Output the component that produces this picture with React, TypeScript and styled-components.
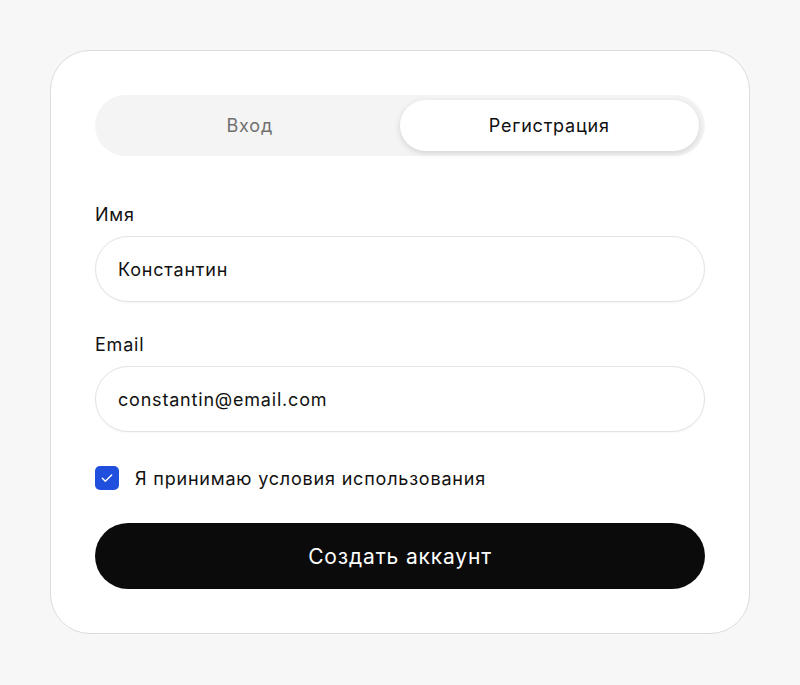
import React, { useState } from "react";
import styled, { createGlobalStyle } from "styled-components";

const GlobalStyle = createGlobalStyle`
  * { box-sizing: border-box; }
  html, body { margin: 0; padding: 0; }
  body {
    background: #f7f7f7;
    font-family: Inter, "Noto Sans", "Liberation Sans", sans-serif;
    letter-spacing: 0.05em;
    color: #111;
  }
`;

const Page = styled.div`
  width: 800px;
  height: 685px;
  padding: 50px;
`;

const Card = styled.div`
  width: 700px;
  background: #fff;
  border: 1px solid #dcdcdc;
  border-radius: 40px;
  padding: 44px;
  display: flex;
  flex-direction: column;
`;

const Tabs = styled.div`
  display: grid;
  grid-template-columns: 1fr 1fr;
  height: 61px;
  padding: 5px 6px 5px 5px;
  background: #f4f4f4;
  border-radius: 31px;
  margin-bottom: 47px;
`;

const Tab = styled.button<{ $active?: boolean }>`
  border: none;
  border-radius: 26px;
  font-family: inherit;
  letter-spacing: inherit;
  font-size: 18px;
  cursor: pointer;
  background: ${({ $active }) => ($active ? "#fff" : "transparent")};
  color: ${({ $active }) => ($active ? "#111" : "#707070")};
  box-shadow: ${({ $active }) =>
    $active ? "0 2px 6px rgba(0,0,0,0.14)" : "none"};
`;

const Field = styled.div`
  display: flex;
  flex-direction: column;
  gap: 10px;
  margin-bottom: 31px;
`;

const Label = styled.label`
  font-size: 18px;
  line-height: 23px;
  color: #111;
`;

const Input = styled.input`
  height: 66px;
  width: 100%;
  border: 1px solid #e3e3e3;
  border-radius: 33px;
  padding: 0 22px;
  font-family: inherit;
  letter-spacing: inherit;
  font-size: 18px;
  color: #111;
  background: #fff;
  outline: none;
  box-shadow: 0 1px 2px rgba(0, 0, 0, 0.04);
`;

const CheckRow = styled.label`
  display: flex;
  align-items: center;
  gap: 16px;
  font-size: 18px;
  color: #111;
  margin-top: 3px;
  margin-bottom: 33px;
  cursor: pointer;
`;

const Box = styled.span<{ $checked: boolean }>`
  width: 24px;
  height: 24px;
  border-radius: 5px;
  display: flex;
  align-items: center;
  justify-content: center;
  background: ${({ $checked }) => ($checked ? "#1f4fdc" : "#fff")};
  border: ${({ $checked }) => ($checked ? "none" : "1px solid #ccc")};
`;

const Submit = styled.button`
  height: 66px;
  width: 100%;
  border: none;
  border-radius: 33px;
  background: #0b0b0b;
  color: #fff;
  font-family: inherit;
  font-size: 21px;
  letter-spacing: 0.04em;
  cursor: pointer;
`;

export default function App() {
  const [tab, setTab] = useState<"login" | "register">("register");
  const [name, setName] = useState("Константин");
  const [email, setEmail] = useState("constantin@email.com");
  const [agree, setAgree] = useState(true);

  return (
    <>
      <GlobalStyle />
      <Page>
        <Card>
          <Tabs>
            <Tab $active={tab === "login"} onClick={() => setTab("login")}>
              Вход
            </Tab>
            <Tab $active={tab === "register"} onClick={() => setTab("register")}>
              Регистрация
            </Tab>
          </Tabs>

          <Field>
            <Label>Имя</Label>
            <Input value={name} onChange={(e) => setName(e.target.value)} />
          </Field>

          <Field>
            <Label>Email</Label>
            <Input value={email} onChange={(e) => setEmail(e.target.value)} />
          </Field>

          <CheckRow onClick={() => setAgree(!agree)}>
            <Box $checked={agree}>
              {agree && (
                <svg width="16" height="16" viewBox="0 0 24 24" fill="none">
                  <path
                    d="M5 12.5l4.5 4.5L19 7.5"
                    stroke="#fff"
                    strokeWidth="2.2"
                    strokeLinecap="round"
                    strokeLinejoin="round"
                  />
                </svg>
              )}
            </Box>
            Я принимаю условия использования
          </CheckRow>

          <Submit>Создать аккаунт</Submit>
        </Card>
      </Page>
    </>
  );
}
